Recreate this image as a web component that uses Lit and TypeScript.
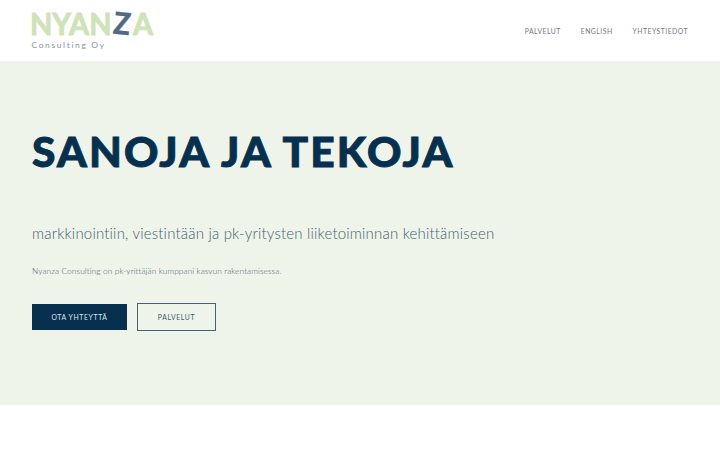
import {html, css, LitElement} from 'lit';
import {customElement, property} from 'lit/decorators.js';


@customElement('nyanza-logo')
export class Logo extends LitElement {
  static styles = css`
    :host {
      display: block;
      height: 52px;
    }
    svg {
      display: block;
      overflow: visible;
    }
    .name {
      font: 700 30.5px Lato, sans-serif;
      fill: #cfe2b8;
      stroke: #cfe2b8;
      stroke-width: 0.9px;
    }
    .accent {
      font-weight: 900;
      fill: #4f6b83;
      stroke: #4f6b83;
      stroke-width: 0.3px;
    }
    .sub {
      font: 400 8.4px Lato, sans-serif;
      font-variant-ligatures: none;
      fill: #8292a2;
    }`;

  render() {
    return html`
      <svg width="124" height="52" viewBox="0 0 124 52" role="img" aria-label="Nyanza Consulting Oy">
        <text class="name" x="-2" y="34.5" textLength="81.5" lengthAdjust="spacingAndGlyphs">NYAN</text>
        <text class="name accent" x="81.5" y="34.5" textLength="17" lengthAdjust="spacingAndGlyphs" transform="rotate(6 91 24)">Z</text>
        <text class="name" x="101" y="34.5" textLength="20" lengthAdjust="spacingAndGlyphs">A</text>
        <text class="sub" x="-0.5" y="47.5" textLength="72.5">Consulting Oy</text>
      </svg>`;
  }
}


@customElement('cta-button')
export class CtaButton extends LitElement {
  static styles = css`
    a {
      display: flex;
      align-items: center;
      justify-content: center;
      box-sizing: border-box;
      width: 79px;
      height: 28px;
      border: 1px solid #4a6070;
      color: #3d5667;
      font: 400 6.8px Lato, sans-serif;
      letter-spacing: 0.65px;
      white-space: nowrap;
      cursor: pointer;
    }
    .filled {
      width: 95px;
      height: 26.5px;
      border: 0;
      background: #07304f;
      color: #dfe8ea;
    }`;

  @property() kind = 'outline';

  render() {
    return html`<a class="${this.kind}"><slot></slot></a>`;
  }
}


@customElement('app-root')
export class AppRoot extends LitElement {
  static styles = css`
    :host {
      display: block;
      height: 450px;
      overflow: hidden;
      background: #fff;
      font-family: Lato, sans-serif;
      font-variant-ligatures: none;
    }
    header {
      display: flex;
      justify-content: space-between;
      height: 61px;
      padding: 0 32px;
    }
    nav {
      display: flex;
      gap: 20px;
      padding-top: 26px;
      font-size: 6.8px;
      line-height: 10px;
      letter-spacing: 0.5px;
      color: #6c7a85;
    }
    .hero {
      box-sizing: border-box;
      height: 344px;
      padding: 64px 32px 0;
      background: #eef4ea;
      white-space: nowrap;
    }
    h1 {
      margin: 0;
      font-size: 42.5px;
      font-weight: 900;
      line-height: 52px;
      letter-spacing: 2.15px;
      color: #07304f;
      -webkit-text-stroke: 0.9px #07304f;
    }
    h2 {
      margin: 46px 0 0;
      font-size: 15px;
      font-weight: 300;
      line-height: 20px;
      letter-spacing: 0.19px;
      color: #47606f;
    }
    p {
      margin: 22px 0 0;
      font-size: 8.3px;
      font-weight: 300;
      line-height: 12px;
      letter-spacing: 0.1px;
      color: #47606f;
    }
    .actions {
      display: flex;
      align-items: center;
      gap: 10px;
      margin-top: 26px;
    }`;

  render() {
    return html`
      <header>
        <nyanza-logo></nyanza-logo>
        <nav>
          <span>PALVELUT</span>
          <span>ENGLISH</span>
          <span>YHTEYSTIEDOT</span>
        </nav>
      </header>

      <section class="hero">
        <h1>SANOJA JA TEKOJA</h1>
        <h2>markkinointiin, viestintään ja pk-yritysten liiketoiminnan kehittämiseen</h2>
        <p>Nyanza Consulting on pk-yrittäjän kumppani kasvun rakentamisessa.</p>
        <div class="actions">
          <cta-button kind="filled">OTA YHTEYTTÄ</cta-button>
          <cta-button>PALVELUT</cta-button>
        </div>
      </section>`;
  }
}
